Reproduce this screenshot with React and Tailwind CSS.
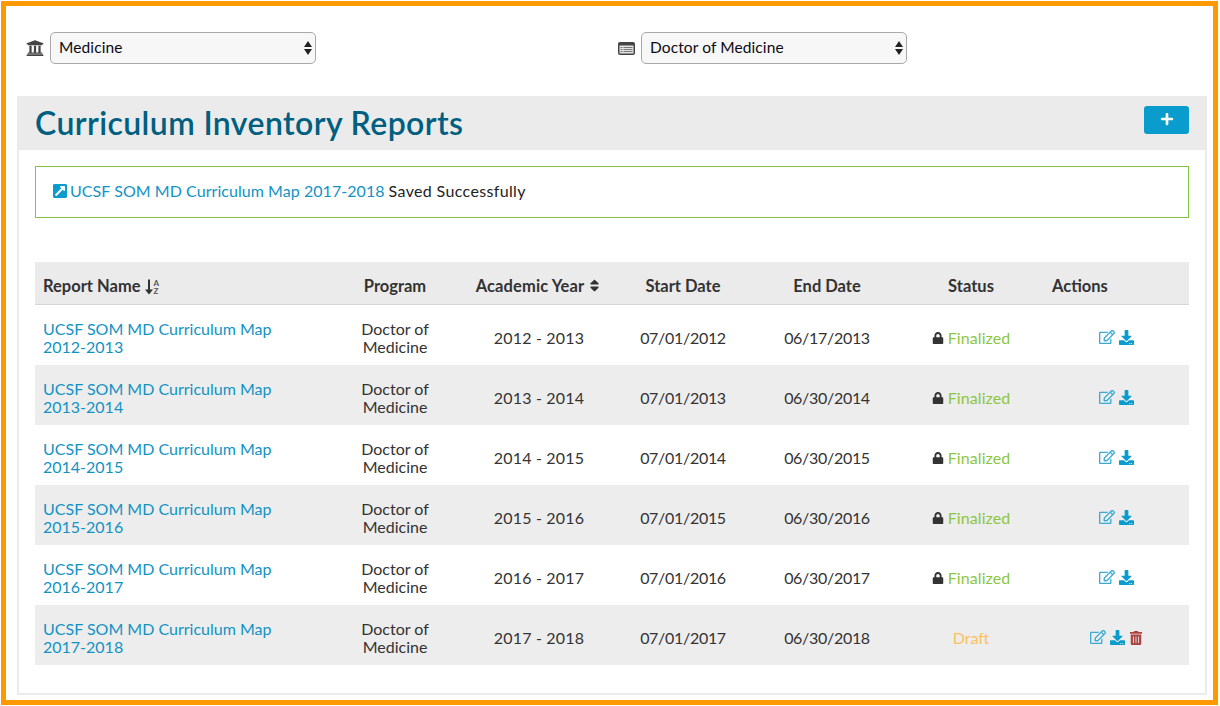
import React from "react";
import {
  FaUniversity,
  FaPlus,
  FaExternalLinkSquareAlt,
  FaSort,
  FaLock,
  FaRegEdit,
  FaDownload,
  FaTrashAlt,
} from "react-icons/fa";

const reports = [
  { name: "2012-2013", year: "2012 - 2013", start: "07/01/2012", end: "06/17/2013" },
  { name: "2013-2014", year: "2013 - 2014", start: "07/01/2013", end: "06/30/2014" },
  { name: "2014-2015", year: "2014 - 2015", start: "07/01/2014", end: "06/30/2015" },
  { name: "2015-2016", year: "2015 - 2016", start: "07/01/2015", end: "06/30/2016" },
  { name: "2016-2017", year: "2016 - 2017", start: "07/01/2016", end: "06/30/2017" },
  { name: "2017-2018", year: "2017 - 2018", start: "07/01/2017", end: "06/30/2018", draft: true },
];

// fa-list-alt, the filled one
function ListAltIcon() {
  return (
    <svg width="17" height="13" viewBox="0 0 17 13">
      <rect x="0" y="0" width="17" height="13" rx="2" fill="#444" />
      <rect x="1.5" y="3.5" width="14" height="8" fill="#e4e4e4" />
      <path d="M2.5 5h2v1h-2zM2.5 7h2v1h-2zM2.5 9h2v1h-2zM5.5 5h9v1h-9zM5.5 7h9v1h-9zM5.5 9h9v1h-9z" fill="#777" />
    </svg>
  );
}

function SortAz() {
  return (
    <span className="inline-flex items-center align-middle ml-[4px] -mt-[1px]">
      <svg width="8" height="16" viewBox="0 0 8 15">
        <path d="M3 0h2v10h3l-4 5-4-5h3z" fill="#333" />
      </svg>
      <span className="flex flex-col ml-[1px] text-[8px] leading-[8px] font-bold text-[#555]">
        <span>A</span>
        <span>Z</span>
      </span>
    </span>
  );
}

function Picker({ icon, value }) {
  return (
    <div className="flex items-center gap-[5px]">
      <span className="w-[20px] text-[#444] text-[18px] flex justify-center">{icon}</span>
      <div className="relative w-[266px] h-[32px]">
        <select
          defaultValue={value}
          className="appearance-none w-full h-full rounded-[5px] border border-[#a9a9a9] bg-[#f7f7f7] pl-[8px] text-[15.5px] tracking-[0.1px] text-[#0b0b14] outline-none"
        >
          <option>{value}</option>
        </select>
        <svg className="absolute right-[3px] top-[8px] pointer-events-none" width="10" height="16" viewBox="0 0 10 16">
          <path d="M5 1 L9 7 L1 7 Z M1 9 L9 9 L5 15 Z" fill="#222" />
        </svg>
      </div>
    </div>
  );
}

export default function App() {
  return (
    <div className="w-[1220px] h-[706px] bg-white pt-[1px] pl-[1px] font-['Lato',sans-serif]">
      <div className="w-[1217px] h-[704px] border-[5px] border-[#ff9900] pl-[11px] pr-[6px] pt-[26px]">
        {/* Filtros */}
        <div className="flex h-[32px] pl-[8px]">
          <div className="w-[591px]">
            <Picker icon={<FaUniversity />} value="Medicine" />
          </div>
          <Picker icon={<ListAltIcon />} value="Doctor of Medicine" />
        </div>

        <div className="mt-[32px] h-[599px] border-x-2 border-b-2 border-[#ebebeb]">
          <div className="-mx-[2px] h-[54px] bg-[#ebebeb] flex items-center justify-between pl-[18px] pr-[18px]">
            <h1 className="text-[32px] leading-none font-semibold text-[#005f80] tracking-[0.4px]">
              Curriculum Inventory Reports
            </h1>
            <button className="w-[45px] h-[28px] -mt-[6px] rounded-[3px] bg-[#0a9ccc] text-white flex items-center justify-center text-[14px]">
              <FaPlus className="-mt-[2px]" />
            </button>
          </div>

          <div className="px-[16px] pt-[16px]">
            <div className="h-[52px] pb-[2px] border border-[#82c341] flex items-center pl-[16px] text-[16px] text-[#222]">
              <FaExternalLinkSquareAlt className="text-[#0a9ccc] text-[16px] mr-[2px]" />
              <a className="text-[#1293c4] tracking-[0.05px]">UCSF SOM MD Curriculum Map 2017-2018</a>
              <span className="ml-[4px] tracking-[0.35px]">Saved Successfully</span>
            </div>

            <table className="mt-[44px] w-[1154px] table-fixed border-separate border-spacing-0 text-[16px] text-[#333]">
              <colgroup>
                <col className="w-[317px]" />
                <col className="w-[86px]" />
                <col className="w-[202px]" />
                <col className="w-[86px]" />
                <col className="w-[202px]" />
                <col className="w-[86px]" />
                <col className="w-[175px]" />
              </colgroup>
              <thead>
                <tr className="h-[43px] bg-[#ebebeb] text-[16.5px] font-bold">
                  <th className="text-left pl-[8px] pt-[6px] border-b border-[#d6d6d6]">
                    Report Name
                    <SortAz />
                  </th>
                  <th className="pt-[6px] border-b border-[#d6d6d6]">Program</th>
                  <th className="pt-[6px] border-b border-[#d6d6d6] whitespace-nowrap">
                    <span className="tracking-[0.1px]">Academic Year</span>
                    <FaSort className="inline text-[15px] -mt-[3px] ml-[3px]" />
                  </th>
                  <th className="pt-[6px] border-b border-[#d6d6d6]">Start Date</th>
                  <th className="pt-[6px] border-b border-[#d6d6d6]">End Date</th>
                  <th className="pt-[6px] border-b border-[#d6d6d6]">Status</th>
                  <th className="text-left pl-[38px] pt-[6px] border-b border-[#d6d6d6]">Actions</th>
                </tr>
              </thead>
              <tbody>
                {reports.map((r, i) => (
                  <tr key={r.name} className={"h-[60px] " + (i % 2 ? "bg-[#ededed]" : "bg-white")}>
                    <td className="pl-[8px] pt-[6px] leading-[18px] text-[#1293c4]">
                      UCSF SOM MD Curriculum Map
                      <br />
                      {r.name}
                    </td>
                    <td className="text-center pt-[6px] leading-[18px]">
                      Doctor of
                      <br />
                      Medicine
                    </td>
                    <td className="text-center pt-[6px] tracking-[0.2px]">{r.year}</td>
                    <td className="text-center pt-[6px] tracking-[-0.3px]">{r.start}</td>
                    <td className="text-center pt-[6px] tracking-[-0.3px]">{r.end}</td>
                    <td className="text-center pt-[6px] whitespace-nowrap">
                      {r.draft ? (
                        <span className="text-[#fbc15e]">Draft</span>
                      ) : (
                        <span className="text-[#8cc63f] tracking-[0.1px]">
                          <FaLock className="inline text-[#333] text-[12px] -mt-[3px] mr-[4px]" />
                          Finalized
                        </span>
                      )}
                    </td>
                    <td className="pl-[29px] pt-[4px]">
                      <div className="flex justify-center items-center gap-[4px] text-[15px] text-[#0a9ccc]">
                        <FaRegEdit className="text-[16px] text-[#3aa9d3]" />
                        <FaDownload />
                        {r.draft && <FaTrashAlt className="text-[#a94442] text-[14px] mt-[1px]" />}
                      </div>
                    </td>
                  </tr>
                ))}
              </tbody>
            </table>
          </div>
        </div>
      </div>
    </div>
  );
}
